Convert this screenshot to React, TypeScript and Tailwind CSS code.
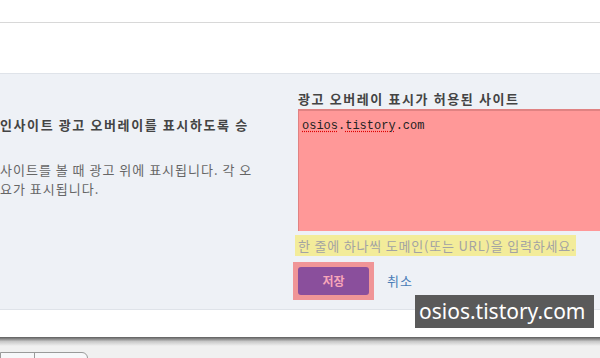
export default function App() {
  const kr = { fontFamily: '"Noto Sans CJK KR", "Noto Sans", sans-serif' };

  return (
    <div className="relative w-[600px] h-[358px] overflow-hidden bg-[#f0f0f0]" style={kr}>
      <div className="h-[23px] bg-white border-b border-[#d8d8d8]" />
      <div className="h-[50px] bg-white" />

      <div className="h-[237px] flex bg-[#eef1f6] border-y border-[#dfe3e9]">
        <div className="w-[298px] shrink-0 pt-[41px] overflow-hidden">
          <div className="text-[13px] font-bold text-[#444] leading-[19px] tracking-[1.6px] whitespace-nowrap">
            인사이트 광고 오버레이를 표시하도록 승
          </div>
          <div className="mt-[26px] text-[13px] text-[#666] leading-[19px] tracking-[1px] whitespace-nowrap">
            <div>사이트를 볼 때 광고 위에 표시됩니다. 각 오</div>
            <div>요가 표시됩니다.</div>
          </div>
        </div>

        <div className="flex-1 pt-[15px]">
          <div className="text-[13px] font-bold text-[#444] leading-[19px] tracking-[1.6px] whitespace-nowrap">
            광고 오버레이 표시가 허용된 사이트
          </div>
          <div className="mt-[1px] h-[122px] w-[320px] bg-[#ff9898] border-t-2 border-l border-[#e08282] px-[3px] pt-[3px] leading-[16px]">
            <span className="text-[12px] text-[#222]" style={{ fontFamily: '"Liberation Mono", monospace' }}>
              <span className="underline decoration-dotted decoration-[#d00] underline-offset-2">osios</span>.
              <span className="underline decoration-dotted decoration-[#d00] underline-offset-2">tistory</span>.com
            </span>
          </div>
          <div className="mt-[4px] -ml-[3px] w-[281px] h-[21px] bg-[#f3ec9a] text-[13px] text-[#a3a3a3] leading-[21px] tracking-[0.8px] pl-[3px] whitespace-nowrap">
            한 줄에 하나씩 도메인(또는 URL)을 입력하세요.
          </div>
          <div className="mt-[6px] flex items-center">
            <div className="-ml-[5px] p-[5px] bg-[#f09597]">
              <button className="w-[71px] h-[28px] rounded-[3px] bg-[#8a4f9c] text-[12px] font-bold text-[#f7a6b9]">
                저장
              </button>
            </div>
            <span className="ml-[13px] text-[13px] text-[#4a7db6] tracking-[1px]">취소</span>
          </div>
        </div>
      </div>

      <div className="h-[27px] bg-white" />
      <div className="h-[9px] bg-gradient-to-b from-[#5e5e5e] via-[#c8c8c8] to-[#f0f0f0]" />
      <div className="mt-[6px] flex">
        <div className="w-[88px] h-[10px] bg-[#f7f8fa] border border-[#9a9a9a] rounded-tr-[6px] flex">
          <div className="w-[34px] border-r border-[#9a9a9a]" />
        </div>
      </div>

      <div
        className="absolute left-[415px] top-[295px] w-[179px] h-[33px] bg-[#5a5a5a] text-white text-[21px] leading-[33px] pl-[4px] whitespace-nowrap"
        style={{ fontFamily: '"Noto Sans", sans-serif' }}
      >
        osios.tistory.com
      </div>
    </div>
  );
}
